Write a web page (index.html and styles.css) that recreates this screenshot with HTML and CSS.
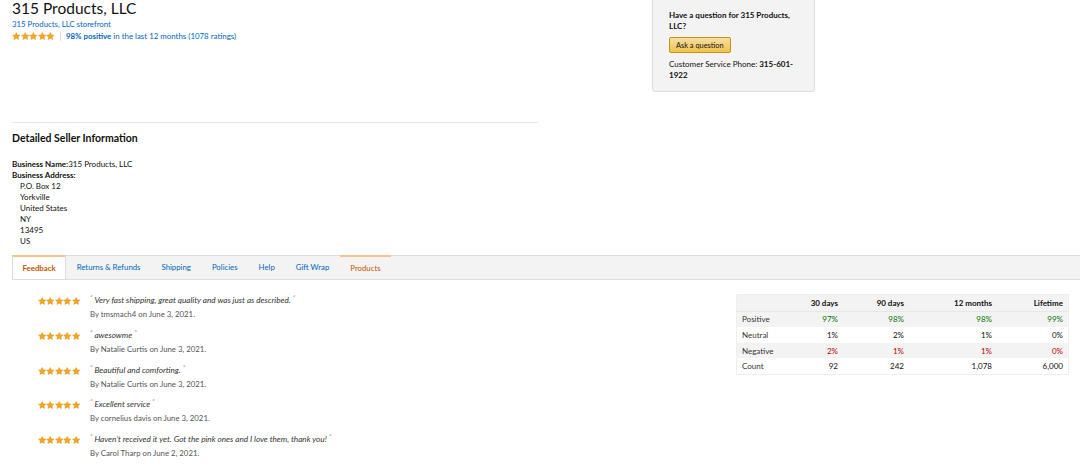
FILE: index.html
```html
<!DOCTYPE html>
<html>
<head>
  <title>315 Products, LLC - Seller Profile</title>
  <link rel="stylesheet" href="styles.css">
</head>
<body>
  <svg width="0" height="0" class="defs">
    <defs>
      <symbol id="star" viewBox="0 0 20 20">
        <path d="M10 1.2l2.6 5.6 6.1.7-4.5 4.2 1.2 6-5.4-3-5.4 3 1.2-6L1.3 7.5l6.1-.7z" fill="#f5a623" stroke="#e08a00" stroke-width="1"/>
      </symbol>
    </defs>
  </svg>

  <div class="top">
    <div class="seller-head">
      <h1>315 Products, LLC</h1>
      <a class="link" href="#">315 Products, LLC storefront</a>
      <div class="rating">
        <span class="stars">
          <svg><use href="#star"/></svg><svg><use href="#star"/></svg><svg><use href="#star"/></svg><svg><use href="#star"/></svg><svg><use href="#star"/></svg>
        </span>
        <span class="sep"></span>
        <a class="link" href="#"><b>98% positive</b> in the last 12 months (1078 ratings)</a>
      </div>

      <hr>

      <h3>Detailed Seller Information</h3>
      <div class="details">
        <div><b>Business Name:</b>315 Products, LLC</div>
        <div><b>Business Address:</b></div>
        <div class="addr">P.O. Box 12</div>
        <div class="addr">Yorkville</div>
        <div class="addr">United States</div>
        <div class="addr">NY</div>
        <div class="addr">13495</div>
        <div class="addr">US</div>
      </div>
    </div>

    <div class="ask-box">
      <p class="ask-title">Have a question for 315 Products, LLC?</p>
      <button>Ask a question</button>
      <p class="phone">Customer Service Phone: <b>315-601-</b><br><b>1922</b></p>
    </div>
  </div>

  <ul class="tabs">
    <li class="tab active">Feedback</li>
    <li class="tab">Returns &amp; Refunds</li>
    <li class="tab">Shipping</li>
    <li class="tab">Policies</li>
    <li class="tab">Help</li>
    <li class="tab">Gift Wrap</li>
    <li class="tab products">Products</li>
  </ul>

  <div class="feedback">
    <div class="reviews" id="reviews"></div>

    <table class="summary">
      <thead>
        <tr><th></th><th>30 days</th><th>90 days</th><th>12 months</th><th>Lifetime</th></tr>
      </thead>
      <tbody>
        <tr class="shade"><td>Positive</td><td class="good">97%</td><td class="good">98%</td><td class="good">98%</td><td class="good">99%</td></tr>
        <tr><td>Neutral</td><td>1%</td><td>2%</td><td>1%</td><td>0%</td></tr>
        <tr class="shade"><td>Negative</td><td class="bad">2%</td><td class="bad">1%</td><td class="bad">1%</td><td class="bad">0%</td></tr>
        <tr><td>Count</td><td>92</td><td>242</td><td>1,078</td><td>6,000</td></tr>
      </tbody>
    </table>
  </div>

  <script>
    const reviews = [
      ['Very fast shipping, great quality and was just as described.', 'tmsmach4', 'June 3, 2021'],
      ['awesowme', 'Natalie Curtis', 'June 3, 2021'],
      ['Beautiful and comforting.', 'Natalie Curtis', 'June 3, 2021'],
      ['Excellent service', 'cornelius davis', 'June 3, 2021'],
      ["Haven\u2019t received it yet. Got the pink ones and I love them, thank you!", 'Carol Tharp', 'June 2, 2021']
    ];

    const list = document.getElementById('reviews');
    const star = '<svg><use href="#star"/></svg>';

    reviews.forEach(r => {
      const row = document.createElement('div');
      row.className = 'review';
      row.innerHTML =
        '<span class="stars">' + star.repeat(5) + '</span>' +
        '<div class="review-body">' +
          '<p class="quote"><span class="q">\u201C</span>' + r[0] + '<span class="q">\u201D</span></p>' +
          '<p class="by">By ' + r[1] + ' on ' + r[2] + '.</p>' +
        '</div>';
      list.appendChild(row);
    });
  </script>
</body>
</html>
```

FILE: styles.css
```css
body {
  margin: 0;
  font-family: Lato, "Open Sans", Arial, sans-serif;
  font-size: 8px;
  color: #111;
  background: #fff;
}
.defs {
  position: absolute;
}
p {
  margin: 0;
}
.link {
  color: #0066c0;
  text-decoration: none;
}

/* header */
.top {
  display: flex;
  margin-top: -3px;
}
.seller-head {
  width: 526px;
  margin-left: 12px;
}
h1 {
  font-size: 15.5px;
  font-weight: 400;
  margin: 0;
  line-height: 22px;
}
.seller-head > .link {
  display: block;
  font-size: 7.8px;
  line-height: 11px;
}
.rating {
  display: flex;
  align-items: center;
  margin-top: 1px;
  line-height: 11px;
  font-size: 7.9px;
}
.stars {
  display: inline-flex;
}
.stars svg {
  width: 8.6px;
  height: 8.6px;
}
.sep {
  width: 1px;
  height: 9px;
  background: #ddd;
  margin: 0 5px;
}
hr {
  border: 0;
  border-top: 1px solid #e7e7e7;
  margin: 80px 0 0;
}
h3 {
  font-size: 10.5px;
  font-weight: 700;
  margin: 8px 0 14px;
  line-height: 14px;
}
.details {
  line-height: 11px;
}
.addr {
  padding-left: 8px;
}

/* ask box */
.ask-box {
  margin: 3px 0 0 114px;
  width: 129px;
  height: 81px;
  padding: 10px 16px 0;
  background: #f3f3f3;
  border: 1px solid #ddd;
  border-top: 0;
  border-radius: 0 0 4px 4px;
  line-height: 11px;
}
.ask-title {
  font-weight: 700;
}
.ask-box button {
  margin: 5px 0 5px;
  height: 16px;
  padding: 0 6px;
  font-family: inherit;
  font-size: 7.4px;
  color: #111;
  background: linear-gradient(#f7dfa5, #f0c14b);
  border: 1px solid #c89411;
  border-radius: 2px;
}
.phone {
  margin-top: 1px;
}

/* tabs */
.tabs {
  display: flex;
  list-style: none;
  margin: 8px 0 0 12px;
  padding: 0;
  height: 23px;
  background: #f3f3f3;
  border-top: 1px solid #ddd;
  border-bottom: 1px solid #ddd;
}
.tab {
  position: relative;
  top: -1px;
  height: 24px;
  padding: 0 10.5px;
  line-height: 23px;
  color: #0066c0;
  font-size: 7.8px;
  border-top: 1px solid transparent;
}
.tab.active {
  box-sizing: border-box;
  padding: 0 9.5px;
  background: #fff;
  color: #c45500;
  font-weight: 700;
  border-top: 2px solid #f3c28e;
  border-right: 1px solid #ddd;
  border-left: 1px solid #ddd;
}
.tab.products {
  color: #c45500;
  border-top: 2px solid #f3c28e;
  line-height: 22px;
}

/* feedback */
.feedback {
  display: flex;
  padding: 12px 0 0 38px;
}
.reviews {
  width: 698px;
}
.review {
  display: flex;
  height: 34.8px;
}
.review .stars {
  width: 52px;
  align-self: flex-start;
  margin-top: 5px;
}
.review .stars svg {
  width: 8.4px;
  height: 8.4px;
}
.quote {
  font-style: italic;
  font-size: 8.2px;
  color: #333;
  line-height: 13px;
}
.q {
  color: #999;
  font-size: 7px;
  vertical-align: 2px;
  padding: 0 2px 0 0;
}
.q + .q,
.quote .q:last-child {
  padding: 0 0 0 2px;
}
.by {
  color: #555;
  font-size: 7.8px;
  line-height: 11px;
  margin-top: 2px;
}

.summary {
  width: 333px;
  border-collapse: collapse;
  border: 1px solid #eee;
  align-self: flex-start;
  margin-top: 2px;
}
.summary th,
.summary td {
  padding: 0 5px;
  height: 15.6px;
  line-height: 10px;
  text-align: right;
}
.summary th:first-child,
.summary td:first-child {
  text-align: left;
  width: 44px;
  color: #333;
}
.summary th:nth-child(2) { width: 42px; }
.summary th:nth-child(3) { width: 56px; }
.summary th:nth-child(4) { width: 78px; }
.summary thead tr,
.summary .shade {
  background: #f3f3f3;
}
.summary thead tr {
  border-bottom: 1px solid #e7e7e7;
}
.good {
  color: #007600;
}
.bad {
  color: #c40000;
}
```
